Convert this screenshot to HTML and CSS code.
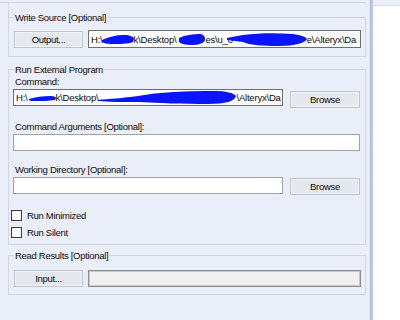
FILE: index.html
```html
<!DOCTYPE html>
<html lang="en">
<head>
    <meta charset="UTF-8">
    <meta name="viewport" content="width=device-width, initial-scale=1.0">
    <title>Run Command</title>
    <link rel="stylesheet" href="styles.css">
</head>
<body>
    <div class="window">
        <div class="panel">
            <div class="topline"></div>
            <div class="stub"></div>

            <fieldset class="group group-source">
                <legend>Write Source [Optional]</legend>
                <div class="row">
                    <button class="btn btn-file">Output...</button>
                    <div class="field field-dark field-path">
                        <span>H:\</span>
                        <svg class="scribble s1" width="32" height="12" viewBox="0 0 32 12"><path d="M0 7 C6 4 14 2 22 2 C28 2 32 4 32 6 L31 9 C26 11 18 11 10 11 C5 11 1 10 0 9 Z"/></svg>
                        <span>k\Desktop\</span>
                        <svg class="scribble s2" width="26" height="13" viewBox="0 0 26 13"><path d="M0 5 C6 2 14 1 20 1 C24 1 26 3 26 6 C26 10 20 12 12 12 C6 12 2 11 0 9 Z"/></svg>
                        <span>es\u_o</span>
                        <svg class="scribble s3" width="80" height="15" viewBox="0 0 80 15"><path d="M0 6 C5 5 10 4 16 3 C32 1 50 1 66 2 C74 3 79 5 80 7 C78 11 68 14 52 14 C36 14 22 13 16 10 C11 9 5 9 0 8 Z"/></svg>
                        <span>e\Alteryx\Da</span>
                    </div>
                </div>
            </fieldset>

            <fieldset class="group group-run">
                <legend>Run External Program</legend>
                <div class="caption">Command:</div>
                <div class="row">
                    <div class="field field-dark field-path field-cmd">
                        <span>H:\</span>
                        <svg class="scribble s4" width="27" height="10" viewBox="0 0 27 10"><path d="M0 6 C6 4 14 3 22 3 C25 3 27 4 27 5 L26 7 C20 8 12 8 6 8 C3 8 1 8 0 7 Z"/></svg>
                        <span>k\Desktop\</span>
                        <svg class="scribble s5" width="138" height="15" viewBox="0 0 138 15"><path d="M0 10 C10 9 25 8 40 6 C60 2 90 1 115 1 C128 1 136 3 138 6 C137 11 128 14 110 14 C85 14 60 13 40 12 C25 12 10 12 0 11 Z"/></svg>
                        <span>\Alteryx\Da</span>
                    </div>
                    <button class="btn btn-browse btn-cmd">Browse</button>
                </div>

                <div class="caption caption-gap">Command Arguments [Optional]:</div>
                <div class="field field-full"></div>

                <div class="caption caption-gap">Working Directory [Optional]:</div>
                <div class="row">
                    <div class="field field-dir"></div>
                    <button class="btn btn-browse btn-dir">Browse</button>
                </div>

                <div class="checks">
                    <label class="check"><span class="box"></span>Run Minimized</label>
                    <label class="check"><span class="box"></span>Run Silent</label>
                </div>
            </fieldset>

            <fieldset class="group group-read">
                <legend>Read Results [Optional]</legend>
                <div class="row">
                    <button class="btn btn-file">Input...</button>
                    <div class="field field-disabled"></div>
                </div>
            </fieldset>
        </div>
        <div class="divider"></div>
        <div class="side">
            <div class="side-top"></div>
        </div>
    </div>
</body>
</html>
```

FILE: styles.css
```css
body {
    margin: 0;
    width: 400px;
    height: 320px;
    overflow: hidden;
    background: #fff;
    font-family: "Liberation Sans", Arial, sans-serif;
    font-size: 9.5px;
    letter-spacing: -0.3px;
    color: #0a0a0a;
}
.window {
    display: flex;
    height: 320px;
}
.panel {
    width: 370px;
    background: #eaeef8;
}
.divider {
    width: 2px;
    background: #bdc9e6;
    border-left: 1px solid #a9b7db;
}
.side {
    flex: 1;
    background: #fff;
}
.side-top {
    height: 5px;
    background: #eaeef8;
    border-bottom: 1px solid #d6dae2;
}
.topline {
    margin-top: 2px;
    width: 366px;
    border-top: 1px solid #d3d7df;
}
.stub {
    height: 14px;
    margin-left: 8px;
    border-left: 1px solid #d3d7df;
}

.group {
    margin: 0 0 0 8px;
    width: 358px;
    box-sizing: border-box;
    min-width: 0;
    border: 1px solid #d3d7df;
    padding: 0 4px;
}
.group legend {
    padding: 0 1px;
    margin-left: 1px;
    height: 11px;
    line-height: 11px;
}
.group-source {
    margin-top: -5px;
    padding-top: 8px;
    padding-bottom: 8px;
}
.group-run {
    margin-top: 7px;
    padding-top: 1px;
    padding-bottom: 3px;
}
.group-read {
    margin-top: 5px;
    padding-top: 9px;
    padding-bottom: 7px;
}

.row {
    display: flex;
    align-items: flex-start;
}
.caption {
    height: 12px;
    line-height: 12px;
    margin-bottom: 1px;
    padding-left: 2px;
}
.caption-gap {
    margin-top: 13px;
}

.btn {
    box-sizing: border-box;
    height: 17px;
    padding: 0;
    font: inherit;
    letter-spacing: inherit;
    color: #0a0a0a;
    background: #e5e8ef;
    border: 1px solid #c0c4cb;
    box-shadow: inset 0 0 0 1px #f1f3f7;
}
.btn-file {
    width: 69px;
    margin-left: 1px;
    margin-right: 5px;
}
.btn-browse {
    width: 70px;
    margin-left: auto;
    margin-right: 1px;
}
.btn-cmd {
    margin-top: 2px;
}
.btn-dir {
    margin-top: 1px;
}

.field {
    box-sizing: border-box;
    height: 17px;
    background: #fff;
    border: 1px solid #a2a2a2;
}
.field-dark {
    border-color: #6e6e6e;
}
.field-path {
    display: flex;
    align-items: center;
    padding-left: 2px;
    overflow: hidden;
    white-space: nowrap;
    letter-spacing: -0.2px;
}
.group-source .field-path {
    flex: 1;
    height: 18px;
    margin-top: -1px;
}
.field-cmd {
    width: 270px;
}
.field-full {
    width: 347px;
}
.field-dir {
    width: 270px;
}
.field-disabled {
    flex: 1;
    height: 17px;
    background: #f0f0f0;
    border-color: #8e8e8e;
    box-shadow: inset 0 0 0 1px #c8c8c8;
}

.scribble {
    flex-shrink: 0;
    fill: #0a14ff;
}
.s1 {
    margin-left: -1px;
}
.s2 {
    margin-left: 3px;
}
.s3 {
    margin-left: -6px;
}
.s4 {
    margin-left: 1px;
}

.checks {
    margin-top: 12px;
}
.check {
    display: flex;
    align-items: center;
    height: 17px;
}
.box {
    box-sizing: border-box;
    width: 11px;
    height: 11px;
    margin-left: -2px;
    margin-right: 5px;
    background: #fff;
    border: 1px solid #3c3c3c;
}
```
